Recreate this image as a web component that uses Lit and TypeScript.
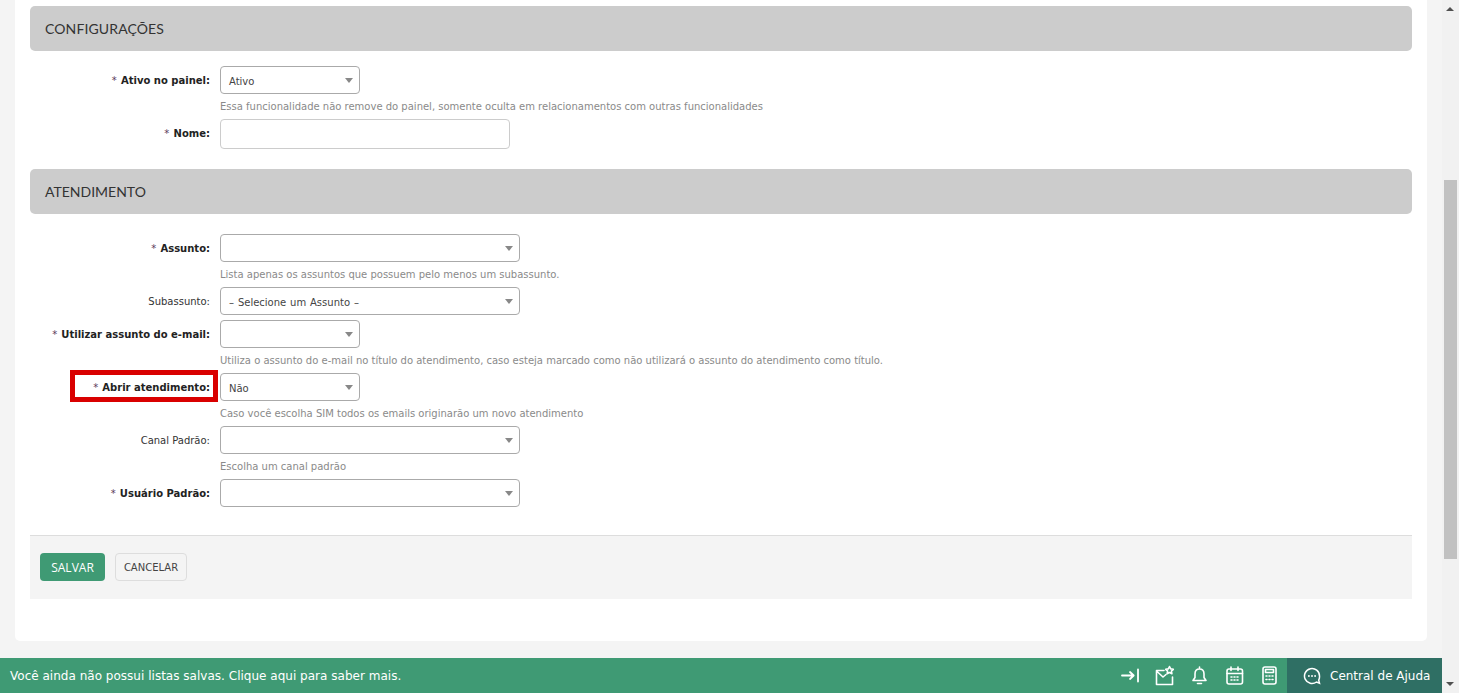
import { LitElement, html, css, svg } from "lit";
import { customElement } from "lit/decorators.js";

type Row = { label: string; req?: boolean; value?: string; w: number; help?: string; input?: boolean; mark?: boolean };

const cfg: Row[] = [
  { label: "Ativo no painel:", req: true, value: "Ativo", w: 140, help: "Essa funcionalidade não remove do painel, somente oculta em relacionamentos com outras funcionalidades" },
  { label: "Nome:", req: true, w: 290, input: true },
];
const atd: Row[] = [
  { label: "Assunto:", req: true, w: 300, help: "Lista apenas os assuntos que possuem pelo menos um subassunto." },
  { label: "Subassunto:", value: "– Selecione um Assunto –", w: 300 },
  { label: "Utilizar assunto do e-mail:", req: true, w: 140, help: "Utiliza o assunto do e-mail no título do atendimento, caso esteja marcado como não utilizará o assunto do atendimento como título." },
  { label: "Abrir atendimento:", req: true, value: "Não", w: 140, mark: true, help: "Caso você escolha SIM todos os emails originarão um novo atendimento" },
  { label: "Canal Padrão:", w: 300, help: "Escolha um canal padrão" },
  { label: "Usuário Padrão:", req: true, w: 300 },
];

@customElement("app-root")
export class AppRoot extends LitElement {
  static styles = css`
    :host { display: block; width: 1459px; height: 693px; overflow: hidden; position: relative; background: #f4f4f4; font-family: "DejaVu Sans", Verdana, sans-serif; color: #333; }
    .page { display: flex; height: 693px; }
    .main { width: 1442px; padding: 0 15px; box-sizing: border-box; }
    .card { width: 1412px; height: 641px; box-sizing: border-box; background: #fff; border-radius: 0 0 5px 5px; padding: 6px 15px 0; }
    .head { height: 45px; background: #ccc; border-radius: 5px; display: flex; align-items: center; padding-left: 15px; font: 14px/20px Lato, sans-serif; color: #333; }
    .head.first { letter-spacing: 0.12px; }
    .fields { padding-top: 15px; padding-bottom: 20px; display: flex; flex-direction: column; }
    .fields.b { padding-top: 20px; padding-bottom: 28px; }
    .row { display: grid; grid-template-columns: 180px 1fr; column-gap: 10px; margin-bottom: 5px; }
    .row:last-child { margin-bottom: 0; }
    .label { position: relative; height: 28px; text-align: right; font-size: 10px; line-height: 29px; color: #333; white-space: nowrap; }
    .label.req { font-weight: 700; color: #222; }
    .star { color: #5a3a5a; font-weight: 400; margin-right: 1px; }
    .mark { position: absolute; left: 40px; right: -8px; top: -3px; height: 32px; box-sizing: border-box; border: 5px solid #d90000; }
    .sel { height: 28px; box-sizing: border-box; border: 1px solid #aaa; border-radius: 4px; background: #fff; display: flex; align-items: center; justify-content: space-between; padding: 2px 6px 0 8px; font-size: 10px; word-spacing: 0.7px; color: #444; }
    .sel i { width: 0; height: 0; border-left: 4px solid transparent; border-right: 4px solid transparent; border-top: 5px solid #888; margin-top: -1px; }
    .inp { height: 30px; box-sizing: border-box; border: 1px solid #ccc; border-radius: 4px; background: #fff; }
    .help { height: 14px; margin-top: 6px; font-size: 10px; line-height: 13px; color: #8a8a8a; white-space: nowrap; }
    .foot { height: 64px; box-sizing: border-box; border-top: 1px solid #ddd; background: #f4f4f4; display: flex; align-items: flex-start; gap: 10px; padding: 17px 10px 0; }
    .btn { height: 28px; box-sizing: border-box; border-radius: 4px; display: flex; align-items: center; justify-content: center; }
    .save { width: 65px; background: #3f9a74; color: #fff; font: 500 12px "Open Sans", sans-serif; }
    .cancel { width: 72px; border: 1px solid #ddd; color: #444; font: 10px "DejaVu Sans", sans-serif; }
    .bar { position: absolute; left: 0; bottom: 0; width: 1442px; height: 35px; background: #3f9a74; color: #fff; display: flex; align-items: center; font-size: 12px; padding-left: 10px; box-sizing: border-box; }
    .bar .msg { flex: 1; letter-spacing: 0.016px; }
    .icons { display: flex; align-items: center; gap: 10px; margin-right: 5px; }
    .icons svg { display: block; width: 25px; height: 25px; fill: none; stroke: #fff; stroke-width: 1.6; stroke-linecap: round; stroke-linejoin: round; }
    .help-btn { width: 155px; height: 35px; background: #2f6f64; display: flex; align-items: center; padding-left: 16px; box-sizing: border-box; gap: 9px; }
    .help-btn svg { width: 18px; height: 18px; fill: none; stroke: #fff; stroke-width: 1.5; }
    .sb { width: 17px; background: #f1f1f1; position: relative; height: 693px; flex: none; }
    .thumb { position: absolute; left: 2px; width: 13px; top: 180px; height: 379px; background: #c1c1c1; }
    .up, .down { position: absolute; left: 4px; width: 0; height: 0; border-left: 4px solid transparent; border-right: 4px solid transparent; }
    .up { top: 7px; border-bottom: 4px solid #505050; }
    .down { top: 682px; border-top: 4px solid #505050; }
  `;

  private row(r: Row) {
    return html`<div class="row">
      <div class="label ${r.req ? "req" : ""}">${r.mark ? html`<span class="mark"></span>` : ""}${r.req ? html`<span class="star">* </span>` : ""}${r.label}</div>
      <div>
        ${r.input
          ? html`<div class="inp" style="width:${r.w}px"></div>`
          : html`<div class="sel" style="width:${r.w}px"><span>${r.value ?? ""}</span><i></i></div>`}
        ${r.help ? html`<div class="help">${r.help}</div>` : ""}
      </div>
    </div>`;
  }

  render() {
    return html`<div class="page">
      <div class="main">
        <div class="card">
          <div class="head first">CONFIGURAÇÕES</div>
          <div class="fields">${cfg.map((r) => this.row(r))}</div>
          <div class="head">ATENDIMENTO</div>
          <div class="fields b">${atd.map((r) => this.row(r))}</div>
          <div class="foot">
            <div class="btn save">SALVAR</div>
            <div class="btn cancel">CANCELAR</div>
          </div>
        </div>
      </div>
      <div class="sb"><span class="up"></span><div class="thumb"></div><span class="down"></span></div>
      <div class="bar">
        <span class="msg">Você ainda não possui listas salvas. Clique aqui para saber mais.</span>
        <div class="icons">
          <svg viewBox="0 0 25 25">${svg`<path d="M5 12.500h11.500M13 9l3.700 3.500-3.700 3.500M21 6.500v12" stroke-width="1.800"/>`}</svg>
          <svg viewBox="0 0 25 25">${svg`<path d="M12 7.500H4.500v14h16V14M4.500 8l6.500 6 3-2.500"/><path d="M17.500 3.500l1.200 2.400 2.600.4-1.900 1.800.5 2.600-2.400-1.200-2.400 1.200.5-2.600-1.900-1.800 2.600-.4z"/>`}</svg>
          <svg viewBox="0 0 25 25">${svg`<path d="M12.500 6c-3 0-4.500 2.200-4.500 5v3.500l-2 3h13l-2-3V11c0-2.800-1.500-5-4.500-5zM12.500 4v2M10.500 20.500h4"/>`}</svg>
          <svg viewBox="0 0 25 25">${svg`<rect x="5" y="6" width="15.500" height="15" rx="2"/><path d="M5 10.500h15.500M9 4v3.500M16 4v3.500M9 14h1M12 14h1M15 14h1M9 17h1M12 17h1M15 17h1"/>`}</svg>
          <svg viewBox="0 0 25 25">${svg`<rect x="6" y="4" width="13" height="17" rx="2"/><rect x="8.500" y="6.500" width="8" height="3"/><path d="M9 13h1M12 13h1M15 13h1M9 16.500h1M12 16.500h1M15 16.500h1"/>`}</svg>
        </div>
        <div class="help-btn">
          <svg viewBox="0 0 18 18">${svg`<path d="M16.500 9a7.500 7.500 0 1 0-3 6l3 1.200-.8-3a7.500 7.500 0 0 0 .8-4.200z"/><path d="M5.200 9h1.400M8.300 9h1.400M11.400 9h1.400" stroke-width="1.800"/>`}</svg>
          <span>Central de Ajuda</span>
        </div>
      </div>
    </div>`;
  }
}
